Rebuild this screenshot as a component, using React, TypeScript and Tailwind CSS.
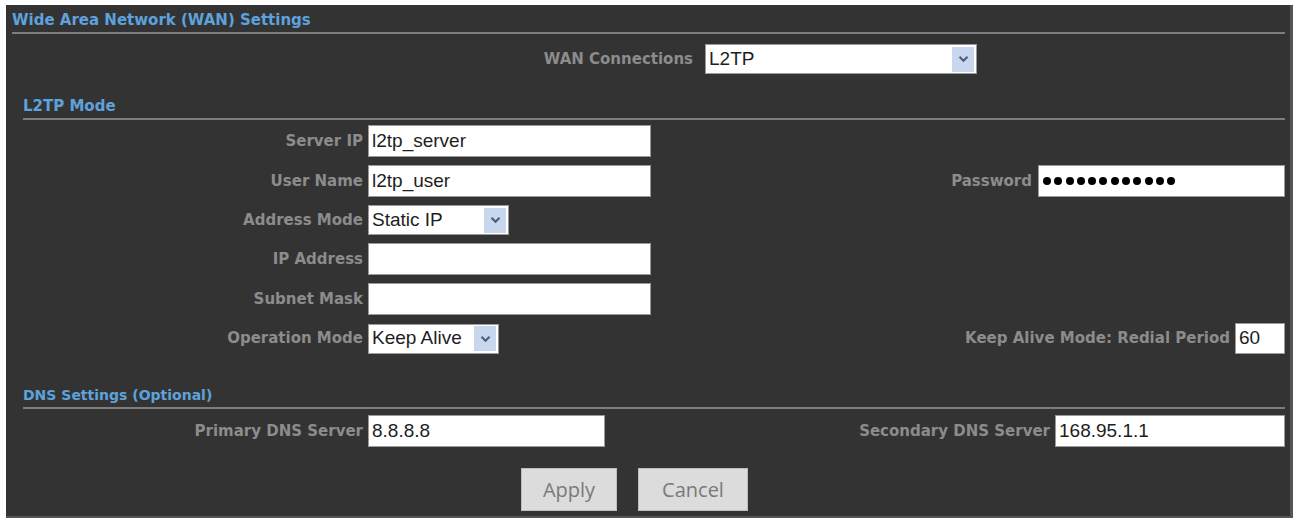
import React from "react";

const labelCls =
  "font-['DejaVu_Sans',sans-serif] font-bold text-[15px] text-[#8c8c8c] whitespace-nowrap";
const inputCls =
  "bg-white border border-[#9a9a9a] pl-[3px] flex items-center font-['Liberation_Sans',Arial,sans-serif] text-[19px] text-[#1e1e1e] whitespace-nowrap";

function SectionTitle({ title, indent, size = "text-[15px]" }: { title: string; indent: string; size?: string }) {
  return (
    <div className={indent}>
      <div className={`font-['DejaVu_Sans',sans-serif] font-bold ${size} leading-[18px] text-[#5ea2dc]`}>
        {title}
      </div>
      <div className="mt-[3px] h-[2px] bg-[#7d7d7d]" />
    </div>
  );
}

function Arrow() {
  return (
    <div className="ml-auto mr-[2px] flex h-[25px] w-[22px] items-center justify-center bg-[#c9d7ee]">
      <svg width="11" height="8" viewBox="0 0 11 8">
        <path d="M1.5 1.8 L5.5 5.8 L9.5 1.8" fill="none" stroke="#4b5e86" strokeWidth="2.2" />
      </svg>
    </div>
  );
}

function Select({ value, width }: { value: string; width: string }) {
  return (
    <div className={`${inputCls} ${width} h-[30px]`}>
      <span>{value}</span>
      <Arrow />
    </div>
  );
}

function TextBox({ value, width, height = "h-[32px]" }: { value?: string; width: string; height?: string }) {
  return <div className={`${inputCls} ${width} ${height}`}>{value}</div>;
}

function LeftLabel({ text }: { text: string }) {
  return <div className={`${labelCls} w-[358px] pr-[1px] text-right`}>{text}</div>;
}

export default function App() {
  return (
    <div className="h-[520px] w-[1296px] bg-white pl-[6px] pt-[5px]">
      <div className="h-[513px] w-[1287px] border-b-[2px] border-r-[3px] border-[#555] bg-[#333333]">
        <div className="pt-[6px]">
          <SectionTitle title="Wide Area Network (WAN) Settings" indent="pl-[6px] pr-[5px]" />
        </div>

        <div className="mt-[10px] flex items-center">
          <div className={`${labelCls} w-[687px] text-right`}>WAN Connections</div>
          <div className="ml-[12px]">
            <Select value="L2TP" width="w-[272px]" />
          </div>
        </div>

        <div className="mt-[23px]">
          <SectionTitle title="L2TP Mode" indent="pl-[17px] pr-[5px]" />
        </div>

        <div className="mt-[5px] flex flex-col gap-[8px]">
          <div className="flex items-center">
            <LeftLabel text="Server IP" />
            <div className="ml-[4px]">
              <TextBox value="l2tp_server" width="w-[283px]" />
            </div>
          </div>
          <div className="flex items-center">
            <LeftLabel text="User Name" />
            <div className="ml-[4px]">
              <TextBox value="l2tp_user" width="w-[283px]" />
            </div>
            <div className="flex flex-1 items-center justify-end gap-[6px] pr-[5px]">
              <div className={labelCls}>Password</div>
              <div className={`${inputCls} h-[32px] w-[247px] gap-[3.3px] pl-[4px]`}>
                {Array.from({ length: 12 }).map((_, i) => (
                  <span key={i} className="h-[8px] w-[8px] rounded-full bg-black" />
                ))}
              </div>
            </div>
          </div>
          <div className="flex items-center">
            <LeftLabel text="Address Mode" />
            <div className="ml-[4px]">
              <Select value="Static IP" width="w-[141px]" />
            </div>
          </div>
          <div className="flex items-center">
            <LeftLabel text="IP Address" />
            <div className="ml-[4px]">
              <TextBox width="w-[283px]" />
            </div>
          </div>
          <div className="flex items-center">
            <LeftLabel text="Subnet Mask" />
            <div className="ml-[4px]">
              <TextBox width="w-[283px]" />
            </div>
          </div>
          <div className="flex items-center">
            <LeftLabel text="Operation Mode" />
            <div className="ml-[4px]">
              <Select value="Keep Alive" width="w-[131px]" />
            </div>
            <div className="flex flex-1 items-center justify-end gap-[5px] pr-[5px]">
              <div className={labelCls}>Keep Alive Mode: Redial Period</div>
              <TextBox value="60" width="w-[50px]" height="h-[31px]" />
            </div>
          </div>
        </div>

        <div className="mt-[32px]">
          <SectionTitle title="DNS Settings (Optional)" indent="pl-[17px] pr-[5px]" size="text-[14px]" />
        </div>

        <div className="mt-[6px] flex items-center">
          <LeftLabel text="Primary DNS Server" />
          <div className="ml-[4px]">
            <TextBox value="8.8.8.8" width="w-[237px]" />
          </div>
          <div className="flex flex-1 items-center justify-end gap-[5px] pr-[5px]">
            <div className={labelCls}>Secondary DNS Server</div>
            <TextBox value="168.95.1.1" width="w-[230px]" />
          </div>
        </div>

        <div className="mt-[21px] flex items-center gap-[21px] pl-[515px]">
          <button className="h-[43px] w-[96px] border border-[#bdbdbd] bg-[#dcdcdc] font-['Open_Sans',sans-serif] text-[20px] text-[#7a7a7a]">
            Apply
          </button>
          <button className="h-[43px] w-[110px] border border-[#bdbdbd] bg-[#dcdcdc] font-['Open_Sans',sans-serif] text-[20px] text-[#7a7a7a]">
            Cancel
          </button>
        </div>
      </div>
    </div>
  );
}
